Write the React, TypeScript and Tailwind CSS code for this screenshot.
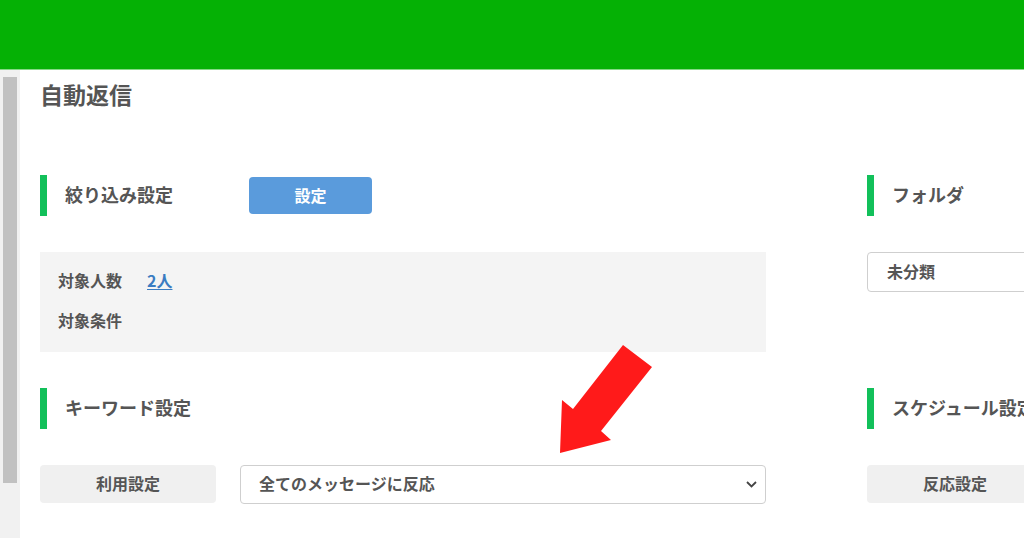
import React from "react";

const font = { fontFamily: '"Noto Sans CJK JP", "Noto Sans", sans-serif' };

function SectionHeader({ title, children, titleClass = "" }: { title: string; children?: React.ReactNode; titleClass?: string }) {
  return (
    <div className="flex h-[41px] items-center">
      <div className="h-full w-[7px] bg-[#12c05a]" />
      <div className={"ml-[18px] pb-[4px] text-[18px] font-bold leading-none text-[#555] " + titleClass}>{title}</div>
      {children}
    </div>
  );
}

function Chevron() {
  return (
    <svg width="11" height="7" viewBox="0 0 11 7" className="shrink-0">
      <path d="M1 1 L5.5 5.5 L10 1" fill="none" stroke="#444" strokeWidth="1.8" />
    </svg>
  );
}

export default function App() {
  return (
    <div className="relative h-[538px] w-[1024px] overflow-hidden bg-white" style={font}>
      <div className="h-[69px] bg-[#05b105]" />
      <div className="h-px bg-[#86d986]" />
      <div className="flex">
        <div className="flex h-[468px] w-[20px] shrink-0 justify-center bg-[#f1f1f1] pt-[7px]">
          <div className="h-[406px] w-[14px] bg-[#c1c1c1]" />
        </div>
        <div className="flex-1 pl-[20px]">
          <div className="pt-[7px] pb-[2px] text-[23px] font-bold leading-[34px] text-[#555]">自動返信</div>

          <div className="mt-[62px] flex">
            <div className="w-[726px] shrink-0">
              <SectionHeader title="絞り込み設定" titleClass="w-[184px]">
                <div className="flex h-[37px] w-[123px] items-center justify-center rounded-[4px] bg-[#5a9bdc] pb-[2px] text-[16px] font-bold text-white">
                  設定
                </div>
              </SectionHeader>
            </div>
            <div className="ml-[101px] w-[300px] shrink-0">
              <SectionHeader title="フォルダ" />
            </div>
          </div>

          <div className="mt-[36px] flex">
            <div className="h-[100px] w-[726px] shrink-0 bg-[#f4f4f4] px-[18px] pt-[16px] text-[16px] font-bold leading-[24px] text-[#555]">
              <div className="flex">
                <span>対象人数</span>
                <span className="ml-[25px] text-[#3a7cc2] underline underline-offset-2">2人</span>
              </div>
              <div className="mt-[16px]">対象条件</div>
            </div>
            <div className="ml-[101px] w-[300px] shrink-0">
              <div className="flex h-[40px] items-center rounded-[4px] border border-[#cfcfcf] pb-[2px] pl-[19px] text-[16px] font-bold text-[#555]">
                未分類
              </div>
            </div>
          </div>

          <div className="mt-[36px] flex">
            <div className="w-[726px] shrink-0">
              <SectionHeader title="キーワード設定" />
            </div>
            <div className="ml-[101px] w-[300px] shrink-0">
              <SectionHeader title="スケジュール設定" />
            </div>
          </div>

          <div className="mt-[36px] flex">
            <div className="flex w-[726px] shrink-0 gap-[24px]">
              <div className="flex h-[38px] w-[176px] items-center justify-center rounded-[4px] bg-[#f0f0f0] pb-[3px] text-[16px] font-bold text-[#555]">
                利用設定
              </div>
              <div className="flex h-[39px] flex-1 items-center justify-between rounded-[4px] border border-[#cfcfcf] pl-[18px] pr-[8px] text-[16px] font-bold text-[#555]">
                <span className="pb-[3px]">全てのメッセージに反応</span>
                <Chevron />
              </div>
            </div>
            <div className="ml-[101px] w-[300px] shrink-0">
              <div className="flex h-[38px] w-[176px] items-center justify-center rounded-[4px] bg-[#f0f0f0] pb-[3px] text-[16px] font-bold text-[#555]">
                反応設定
              </div>
            </div>
          </div>
        </div>
      </div>

      <svg className="absolute left-0 top-0" width="1024" height="538" viewBox="0 0 1024 538">
        <polygon
          points="623,345 652,367 601,431 611,440 560,453 562,400 573,409"
          fill="#ff1a1a"
        />
      </svg>
    </div>
  );
}
